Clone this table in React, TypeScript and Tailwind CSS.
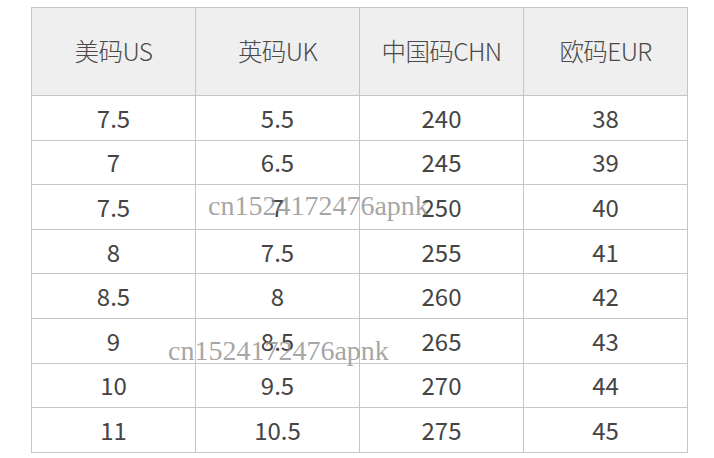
const headers = ['美码US', '英码UK', '中国码CHN', '欧码EUR']

const rows: string[][] = [
  ['7.5', '5.5', '240', '38'],
  ['7', '6.5', '245', '39'],
  ['7.5', '7', '250', '40'],
  ['8', '7.5', '255', '41'],
  ['8.5', '8', '260', '42'],
  ['9', '8.5', '265', '43'],
  ['10', '9.5', '270', '44'],
  ['11', '10.5', '275', '45'],
]

export default function App() {
  return (
    <div className="relative w-[714px] h-[458px] bg-white overflow-hidden pt-[7px] pl-[31px] font-['Noto_Sans_CJK_SC',sans-serif] text-[#454545]">
      <table className="border-collapse table-fixed w-[657px]">
        <thead>
          <tr className="h-[88px] bg-[#efefef]">
            {headers.map((h) => (
              <th key={h} className="w-[164px] border border-[#c6c6c6] text-[24.5px] font-light text-center tracking-[-0.6px] text-[#4a4a4a]">
                {h}
              </th>
            ))}
          </tr>
        </thead>
        <tbody>
          {rows.map((r, i) => (
            <tr key={i} className="h-[44.6px]">
              {r.map((c, j) => (
                <td key={j} className="border border-[#c6c6c6] text-[24px] text-center leading-none">
                  {c}
                </td>
              ))}
            </tr>
          ))}
        </tbody>
      </table>

      {/* watermarks */}
      <div className="absolute left-[208px] top-[192px] text-[28px] leading-none font-['Liberation_Serif',serif] text-[#8e8e8e]/80 pointer-events-none">
        cn1524172476apnk
      </div>
      <div className="absolute left-[168px] top-[337px] text-[28px] leading-none font-['Liberation_Serif',serif] text-[#8e8e8e]/80 pointer-events-none">
        cn1524172476apnk
      </div>
    </div>
  )
}
